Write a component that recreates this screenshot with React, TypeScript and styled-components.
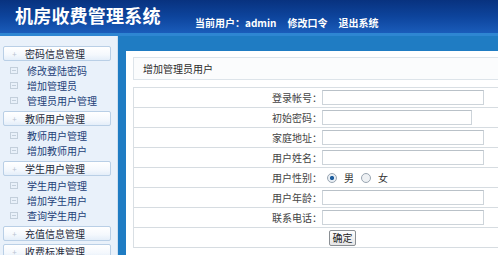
import React from "react";
import styled, { createGlobalStyle } from "styled-components";

const GlobalStyle = createGlobalStyle`
  html, body {
    margin: 0;
    padding: 0;
    background: #ffffff;
  }
  body {
    font-family: "Noto Sans CJK SC", "Noto Sans", sans-serif;
    width: 498px;
    height: 255px;
    overflow: hidden;
  }
`;

const sections = [
  { title: "密码信息管理", items: ["修改登陆密码", "增加管理员", "管理员用户管理"] },
  { title: "教师用户管理", items: ["教师用户管理", "增加教师用户"] },
  { title: "学生用户管理", items: ["学生用户管理", "增加学生用户", "查询学生用户"] },
  { title: "充值信息管理", items: [] },
  { title: "收费标准管理", items: [] },
];

const fields = [
  { label: "登录帐号：", width: 162 },
  { label: "初始密码：", width: 150 },
  { label: "家庭地址：", width: 162 },
  { label: "用户姓名：", width: 162 },
];

const fields2 = [
  { label: "用户年龄：", width: 162 },
  { label: "联系电话：", width: 162 },
];

const App = () => {
  return (
    <Page>
      <GlobalStyle />
      <Header>
        <Title>机房收费管理系统</Title>
        <UserBar>
          <span>当前用户：admin</span>
          <span>修改口令</span>
          <span>退出系统</span>
        </UserBar>
      </Header>
      <Strip />
      <Body>
        <Sidebar>
          {sections.map((s) => (
            <Section key={s.title}>
              <SectionHead>
                <Plus>+</Plus>
                {s.title}
              </SectionHead>
              {s.items.length > 0 && (
                <ItemList>
                  {s.items.map((it) => (
                    <Item key={it}>
                      <ItemIcon />
                      {it}
                    </Item>
                  ))}
                </ItemList>
              )}
            </Section>
          ))}
        </Sidebar>
        <Main>
          <Panel>
            <PanelTitle>增加管理员用户</PanelTitle>
            <Form>
              {fields.map((f) => (
                <Row key={f.label}>
                  <Label>{f.label}</Label>
                  <Cell>
                    <Input $w={f.width} />
                  </Cell>
                </Row>
              ))}
              <Row>
                <Label>用户性别：</Label>
                <Cell>
                  <Radio $checked />
                  <RadioText>男</RadioText>
                  <Radio />
                  <RadioText>女</RadioText>
                </Cell>
              </Row>
              {fields2.map((f) => (
                <Row key={f.label}>
                  <Label>{f.label}</Label>
                  <Cell>
                    <Input $w={f.width} />
                  </Cell>
                </Row>
              ))}
              <Row>
                <Label />
                <Cell>
                  <Button>确定</Button>
                </Cell>
              </Row>
            </Form>
          </Panel>
        </Main>
      </Body>
    </Page>
  );
};

export default App;

const Page = styled.div`
  width: 498px;
  height: 255px;
  overflow: hidden;
  display: flex;
  flex-direction: column;
`;

const Header = styled.div`
  height: 33px;
  flex-shrink: 0;
  background: linear-gradient(180deg, #08327f 0%, #0d449c 50%, #1a5cba 100%);
  display: flex;
  align-items: center;
  color: #ffffff;
`;

const Title = styled.div`
  font-size: 18px;
  font-weight: 700;
  letter-spacing: 0.2px;
  margin-left: 15px;
  margin-top: -3px;
  width: 180px;
`;

const UserBar = styled.div`
  display: flex;
  gap: 11px;
  font-size: 10px;
  font-weight: 700;
  margin-top: 11px;
  white-space: nowrap;
`;

const Strip = styled.div`
  height: 3px;
  flex-shrink: 0;
  background: #2e86d2;
`;

const Body = styled.div`
  flex: 1;
  display: flex;
  min-height: 0;
`;

const Sidebar = styled.div`
  width: 118px;
  flex-shrink: 0;
  background: #e9f1fa;
  border-right: 1px solid #cfe0f0;
  padding-top: 10px;
  box-sizing: border-box;
  overflow: hidden;
`;

const Section = styled.div`
  margin-bottom: 3px;
`;

const SectionHead = styled.div`
  margin: 0 6px 0 3px;
  height: 15px;
  box-sizing: border-box;
  border: 1px solid #b9cfe6;
  border-radius: 2px;
  background: linear-gradient(180deg, #ffffff 0%, #f4f8fd 60%, #e4eef9 100%);
  display: flex;
  align-items: center;
  font-size: 10px;
  color: #1e2a3a;
  white-space: nowrap;
`;

const Plus = styled.span`
  width: 21px;
  text-align: center;
  color: #b8c4d0;
  font-size: 8px;
`;

const ItemList = styled.div`
  padding-top: 2px;
`;

const Item = styled.div`
  height: 15px;
  display: flex;
  align-items: center;
  font-size: 10px;
  color: #1d3f78;
  white-space: nowrap;
`;

const ItemIcon = styled.span`
  width: 6px;
  height: 5px;
  border: 1px solid #c3cfdb;
  margin: 0 9px 0 10px;
  position: relative;
  &::after {
    content: "";
    position: absolute;
    left: 1px;
    right: 1px;
    top: 2px;
    height: 1px;
    background: #c3cfdb;
  }
`;

const Main = styled.div`
  flex: 1;
  background: #1f7cc3;
  padding: 15px 0 0 8px;
  display: flex;
  min-width: 0;
`;

const Panel = styled.div`
  flex: 1;
  background: #ffffff;
  padding: 6px 0 0 7px;
  overflow: hidden;
`;

const PanelTitle = styled.div`
  width: 380px;
  height: 23px;
  box-sizing: border-box;
  border: 1px solid #dde4ea;
  background: #fbfcfd;
  font-size: 10px;
  color: #2b2b2b;
  display: flex;
  align-items: center;
  padding-left: 9px;
  margin-bottom: 7px;
`;

const Form = styled.div`
  width: 380px;
  border: 1px solid #d9dfe4;
  border-bottom: none;
`;

const Row = styled.div`
  height: 19px;
  display: flex;
  align-items: center;
  border-bottom: 1px solid #d6dce1;
`;

const Label = styled.div`
  width: 188px;
  text-align: right;
  font-size: 10px;
  color: #444444;
  flex-shrink: 0;
`;

const Cell = styled.div`
  display: flex;
  align-items: center;
  height: 100%;
`;

const Input = styled.div<{ $w: number }>`
  width: ${(p) => p.$w}px;
  height: 15px;
  box-sizing: border-box;
  border: 1px solid #cdd4da;
  border-top-color: #b9c1c8;
  background: #ffffff;
`;

const Radio = styled.span<{ $checked?: boolean }>`
  width: 8px;
  height: 8px;
  border-radius: 50%;
  border: 1px solid #9aa6b2;
  background: ${(p) =>
    p.$checked
      ? "radial-gradient(circle, #1f5e9e 0 1.8px, #e8eef4 2.4px)"
      : "#eef1f4"};
  margin-left: 5px;
`;

const RadioText = styled.span`
  font-size: 10px;
  color: #333333;
  margin-left: 7px;
  margin-right: 2px;
`;

const Button = styled.div`
  margin-left: 7px;
  width: 27px;
  height: 16px;
  box-sizing: border-box;
  border: 1px solid #8a8f94;
  border-radius: 2px;
  background: linear-gradient(180deg, #fdfdfd 0%, #e6e6e6 100%);
  font-size: 10px;
  color: #222222;
  display: flex;
  align-items: center;
  justify-content: center;
`;
